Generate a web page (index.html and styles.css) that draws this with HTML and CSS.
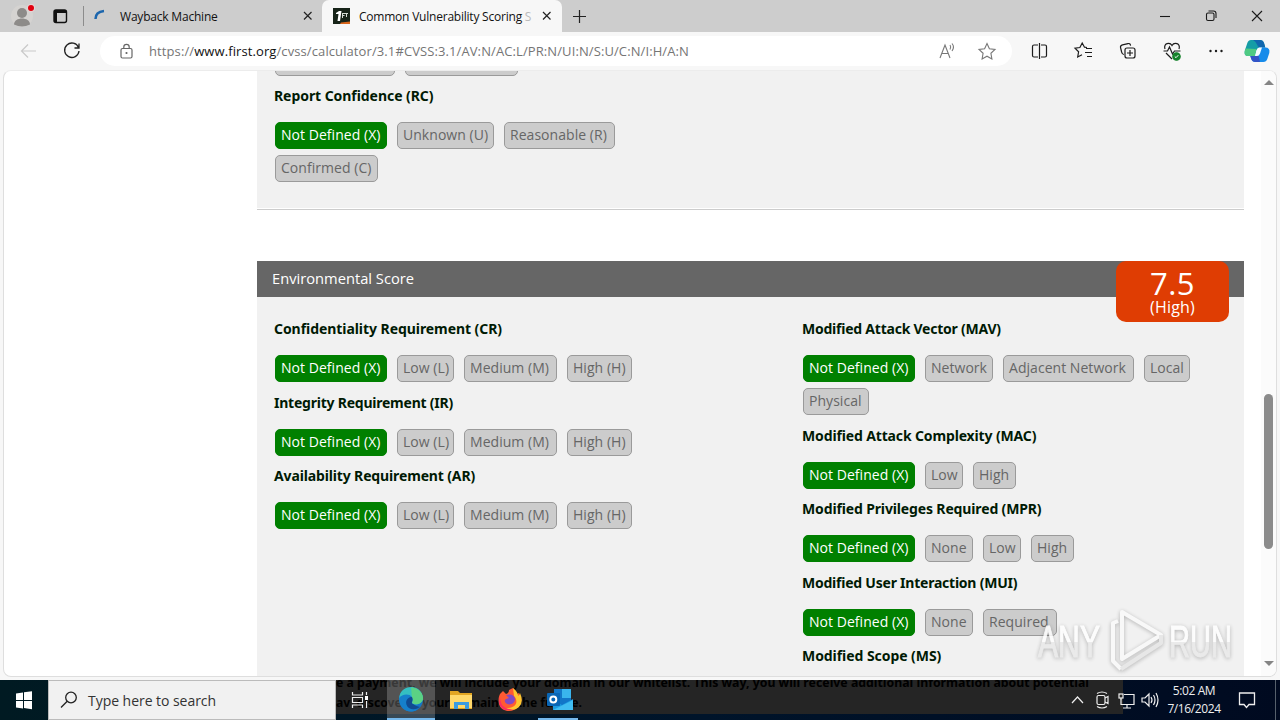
FILE: index.html
```html
<!DOCTYPE html>
<html lang="en">
<head>
<meta charset="utf-8">
<title>Common Vulnerability Scoring System</title>
<link rel="stylesheet" href="styles.css">
</head>
<body>
<div class="screen">
<header class="tabbar">
  <svg class="profile" width="86" height="32" viewBox="0 0 86 32"><circle cx="22" cy="16" r="11" fill="#d5d3d1"/><circle cx="22" cy="13" r="5" fill="#8d8b89"/><path d="M14 24.500c0-8 16-8 16 0q-8 4-16 0z" fill="#8d8b89"/><circle cx="31" cy="8" r="4" fill="#e6d4d4"/><circle cx="31" cy="8" r="3" fill="#e1000f"/><rect x="54" y="10" width="12.500" height="12.500" rx="2" fill="none" stroke="#111" stroke-width="1.400"/><path d="M54 10h12v3H54zM54 11h3v11h-3z" fill="#111"/><path d="M83.500 6v20" stroke="#8c8c8c"/></svg>
  <div class="tab">
    <svg width="16" height="16" viewBox="0 0 16 16"><path d="M3.500 11C3.500 7 6 3.500 12 3" fill="none" stroke="#1c66ad" stroke-width="2.500"/></svg>
    <span class="tab-title t-way">Wayback Machine</span>
    <svg class="close" width="10" height="10" viewBox="0 0 10 10"><path d="M1 1l7.500 7.500M8.500 1L1 8.500" stroke="#222" stroke-width="1.200"/></svg>
  </div>
  <div class="tab active">
    <svg width="17" height="16" viewBox="0 0 17 16"><path d="M0 0h17v16H0z" fill="#172419"/><path d="M3 5l3-2h2.500l-1.500 10H4.500L5.500 6H3z" fill="#fff"/><path d="M9 5h3v1h-2v1h1.500v1H10v2H9zM12 5h3v1h-1v3h-1V6h-1z" fill="#d5dcd5"/><path d="M7 16l1-1.500 9-1V16z" fill="#d9661c"/></svg>
    <span class="tab-title t-cvss">Common Vulnerability Scoring <span class="fade">S</span></span>
    <svg class="close" width="10" height="10" viewBox="0 0 10 10"><path d="M1 1l7.500 7.500M8.500 1L1 8.500" stroke="#222" stroke-width="1.200"/></svg>
  </div>
  <svg class="plus" width="15" height="15" viewBox="0 0 15 15"><path d="M7.500 1v13M1 7.500h13" stroke="#222" stroke-width="1.200"/></svg>
  <svg class="winctl" width="120" height="32" viewBox="0 0 120 32" fill="none" stroke="#1a1a1a" stroke-width="1.100"><path d="M0 16.500h10"/><rect x="46.500" y="13" width="7.500" height="7.500" rx="1.500"/><path d="M48.500 11h5q2.500 0 2.500 2.500V18"/><path d="M92 11l10 10M102 11L92 21"/></svg>
</header>
<div class="toolbar">
  <svg class="nav" width="100" height="38" viewBox="0 0 100 38" fill="none"><path d="M36 19H21.500M28 12.500L21.500 19l6.500 6.500" stroke="#c9c9c9" stroke-width="1.200"/><path d="M78.500 15.500A7.200 7.200 0 1 0 79 19M79 11.500v4.500h-4.500" stroke="#222" stroke-width="1.300"/></svg>
  <div class="address">
    <svg width="14" height="16" viewBox="0 0 14 16" fill="none" stroke="#666" stroke-width="1.200"><rect x="1" y="5.500" width="11" height="9.500" rx="1.500"/><path d="M3.800 5V4a2.700 2.700 0 0 1 5.400 0v1"/><circle cx="6.500" cy="10" r=".5" fill="#666"/></svg>
    <span class="url">https://<b>www.first.org</b>/cvss/calculator/3.1#CVSS:3.1/AV:N/AC:L/PR:N/UI:N/S:U/C:N/I:H/A:N</span>
    <svg class="addr-icons" width="60" height="20" viewBox="0 0 60 20" fill="none" stroke="#777" stroke-width="1.100"><path d="M1 17L6 4l5 13M3 12.500h6M11 4q1.500 2 0 4.500M13 2.500q3 3.500 0 7.500"/><path d="M48 2.500l2.400 5.200 5.600.7-4.100 3.900 1 5.700-4.900-2.800-4.900 2.800 1-5.700L40 8.400l5.600-.7z"/></svg>
  </div>
  <svg class="tools" width="260" height="38" viewBox="0 0 260 38" fill="none" stroke="#1c1c1c" stroke-width="1.200">
    <path d="M18 13h-4q-1.500 0-1.500 1.500v9q0 1.500 1.500 1.500h4M21 13h4q1.500 0 1.500 1.500v9Q26.500 25 25 25h-4M19.500 11v16"/>
    <path d="M67 15.500l-2.500-.3-2.300-4.200-2.300 4.500-4.900.7 3.600 3.600-.9 5.200 4.300-2.300M66 16.500h6M65 20.500h7M67 24.500h5"/>
    <path d="M104 22.500c-2 0-2-1-2.500-3l-1-4q-.3-2 2-2.600l5.500-1.300q2-.5 2.600 2"/><rect x="105" y="16" width="10" height="10" rx="2"/><path d="M110 18v6M107 21h6"/>
    <path d="M145 17c-2-6 5-7 7-3.500 2-3.500 9-2.500 7 3.500M143.500 19h4l2-4 3 7 2-3h6M146 21l6 6"/><circle cx="156.500" cy="24.500" r="3.700" fill="#16832b" stroke="#16832b"/><path d="M154.800 24.500l1.200 1.200 2.300-2.500" stroke="#fff" stroke-width="1"/>
    <g fill="#1c1c1c" stroke="none"><circle cx="190.500" cy="19" r="1.200"/><circle cx="196" cy="19" r="1.200"/><circle cx="201.500" cy="19" r="1.200"/></g>
    <g stroke="none"><path d="M231 8h9q3 0 4 3l1.300 4.500H240q-2.500 0-3.500 3l-1.500 5.500h-8q-3.500-1-2-6l2-6q1-4 4-4z" fill="#159da6"/><path d="M233 8h7q3 0 4 3l1.300 4.500H240q-2 0-3-3t-4-4.500z" fill="#1267ae"/><path d="M226 16.500l10.500.5-1.500 7h-8q-3.500-1-2-6z" fill="#4fca83"/><path d="M240 15.500l5.300 0q5 0 4 5.500l-2 6q-1 3-4 3h-8q-3 0-4-3l-1-3h4.700q2 0 3-3z" fill="#168bea"/><path d="M230.300 24h4.700q2 0 3-3l2 9h-4.700q-3 0-4-3z" fill="#3353c6"/><path d="M236.500 18.500q1-3 3.500-3h2l-2 6q-1 2.500-3 2.500h-2z" fill="#f4fbff"/></g>
  </svg>
</div>
<main class="viewport">
  <div class="page">
    <section class="panel first">
      <div class="opts clipped"><span class="opt w120"></span><span class="opt w113"></span></div>
      <div class="metric"><h4 class="wide">Report Confidence (RC)</h4><div class="opts"><span class="opt on">Not Defined (X)</span><span class="opt w97">Unknown (U)</span><span class="opt w111">Reasonable (R)</span><span class="opt w103">Confirmed (C)</span></div></div>
    </section>
    <section class="env">
      <div class="env-head"><span>Environmental Score</span><div class="score"><strong>7.5</strong><small>(High)</small></div></div>
      <div class="panel columns">
        <div class="col">
          <div class="metric"><h4 class="wide">Confidentiality Requirement (CR)</h4><div class="opts"><span class="opt on">Not Defined (X)</span><span class="opt w57">Low (L)</span><span class="opt w93">Medium (M)</span><span class="opt w65">High (H)</span></div></div>
          <div class="metric"><h4>Integrity Requirement (IR)</h4><div class="opts"><span class="opt on">Not Defined (X)</span><span class="opt w57">Low (L)</span><span class="opt w93">Medium (M)</span><span class="opt w65">High (H)</span></div></div>
          <div class="metric"><h4 class="mid">Availability Requirement (AR)</h4><div class="opts"><span class="opt on">Not Defined (X)</span><span class="opt w57">Low (L)</span><span class="opt w93">Medium (M)</span><span class="opt w65">High (H)</span></div></div>
        </div>
        <div class="col">
          <div class="metric"><h4>Modified Attack Vector (MAV)</h4><div class="opts"><span class="opt on">Not Defined (X)</span><span class="opt w68">Network</span><span class="opt w131">Adjacent Network</span><span class="opt w46">Local</span><span class="opt w66">Physical</span></div></div>
          <div class="metric"><h4 class="mid">Modified Attack Complexity (MAC)</h4><div class="opts"><span class="opt on">Not Defined (X)</span><span class="opt w38">Low</span><span class="opt w43">High</span></div></div>
          <div class="metric"><h4 class="mid">Modified Privileges Required (MPR)</h4><div class="opts"><span class="opt on">Not Defined (X)</span><span class="opt w48">None</span><span class="opt w38">Low</span><span class="opt w43">High</span></div></div>
          <div class="metric"><h4>Modified User Interaction (MUI)</h4><div class="opts"><span class="opt on">Not Defined (X)</span><span class="opt w48">None</span><span class="opt w74">Required</span></div></div>
          <div class="metric"><h4 class="wide">Modified Scope (MS)</h4></div>
        </div>
      </div>
    </section>
  </div>
  <div class="scroll"><i class="up"></i><i class="thumb"></i><i class="down"></i></div>
</main>
<footer class="taskbar">
  <svg class="start" width="48" height="40" viewBox="0 0 48 40"><path d="M16 13.500l7-1V20h-7zM24 12.300l8-1.100V20h-8zM16 21h7v7.500l-7-1zM24 21h8v8.200l-8-1.100z" fill="#fff"/></svg>
  <div class="search"><svg width="18" height="18" viewBox="0 0 18 18" fill="none" stroke="#222" stroke-width="1.300"><circle cx="11" cy="6.500" r="5.300"/><path d="M7.200 10.300L1 16.500"/></svg><span>Type here to search</span></div>
  <div class="apps">
    <svg width="48" height="40" viewBox="0 0 48 40" fill="none" stroke="#eee" stroke-width="1.200"><path d="M13.500 12v3h10v-3M13.500 28v-3h10v3M13.500 17.500h10v5h-10zM27.500 12v3M27.500 21v7"/><path d="M26 16h3v4h-3z" fill="#fff" stroke="none"/></svg>
    <svg class="selected" width="48" height="40" viewBox="0 0 48 40"><circle cx="24" cy="19.500" r="12" fill="#1475c8"/><path d="M12.500 16C15 5 31 4 35 14c3 8-4 12-9 10-3-1 1-3-1-6-3-4-9-4-13 1z" fill="#35bfc1"/><path d="M24 7.500c8 0 13 7 12 12-1 4-6 6-10 4-2-1 1-3-1-6z" fill="#5bd184"/><path d="M12 18c3-4 10-5 13-1-6 0-8 7-3 11q4 3 9 1c-8 6-19 1-19-11z" fill="#1680cb"/><path d="M25 17c-6 0-8 7-3 11q5 3 11-1-3 0-7-3c-3-1 1-3-1-7z" fill="#114b91"/></svg>
    <svg width="48" height="40" viewBox="0 0 48 40"><path d="M14 11h8l2 2h12v16H14z" fill="#e2a522"/><path d="M14 15h22v13H14z" fill="#ffd86a"/><path d="M18 22h15v7h-4v-4h-7v4h-4z" fill="#3a9be1"/></svg>
    <svg width="48" height="40" viewBox="0 0 48 40"><path d="M14 14l3-3 3 3q3-1 3-4l4-2q3 3 4 6l2-1q5 8 0 13c-6 8-18 6-20-2-1-5 0-8 1-10z" transform="translate(1)" fill="#ff5a32"/><path d="M28 8q5 4 5 8 2-1 2-3 4 9-1 14c-5 4-9 3-13 1 12 0 12-8 8-12z" fill="#ffc62f"/><path d="M15 16q0 14 13 13-11 4-14-6z" fill="#fa2d63"/><path d="M21 15q8-2 9 4c0 6-8 7-10 3-1-3 2-3 4-4z" fill="#8249c4"/></svg>
    <svg width="40" height="40" viewBox="4 0 40 40"><g transform="translate(1)"><path d="M19 9h17v21H19z" fill="#1276c8"/><path d="M27 9h9v9h-9z" fill="#39b5ed"/><path d="M18 20l9 5 11-6v11H18z" fill="#1b9be0"/><path d="M18 30l20-10v10z" fill="#41bdf1"/><rect x="12" y="13" width="13" height="13" rx="1" fill="#0966b5"/><circle cx="18.300" cy="19.500" r="3" fill="none" stroke="#fff" stroke-width="2"/></g></svg>
  </div>
  <svg class="notice" width="787" height="34" viewBox="0 0 787 34"><text x="0" y="7" textLength="753" lengthAdjust="spacingAndGlyphs">e a payment, we will include your domain in our whitelist. This way, you will receive additional information about potential</text><text x="0" y="27" textLength="246" lengthAdjust="spacingAndGlyphs">av&#160; discover if your domain in the future.</text></svg>
  <div class="tray">
    <svg width="92" height="40" viewBox="0 0 92 40" fill="none" stroke="#eee" stroke-width="1.200"><path d="M1 23l5.500-6 5.500 6"/><rect x="26" y="15.500" width="8" height="9" rx="1.500"/><path d="M34 18l3-1.500v7L34 22M26 13.500q5-3 10 0M26 26.500q5 3 10 0M53 14.500h10v10H50v-5M56 25v3M52 28h8"/><rect x="48" y="14" width="4" height="4"/><path d="M50 18v2M71 18h3l4-4v12l-4-4h-3zM80 17q2 3 0 6M82.500 15q3 5 0 10M85 13q4 7 0 14"/></svg>
    <div class="clock"><span>5:02 AM</span><span>7/16/2024</span></div>
    <svg width="18" height="18" viewBox="0 0 18 18" fill="none" stroke="#eee" stroke-width="1.300"><path d="M1.500 2h15v11.500H11l-2.500 3-2.500-3H1.500z"/></svg>
  </div>
  <i class="peek"></i>
</footer>
<svg class="watermark" width="210" height="72" viewBox="0 0 210 72"><defs><linearGradient id="wm" x1="0" y1="0" x2="0" y2="1"><stop offset=".5" stop-color="#fff"/><stop offset=".52" stop-color="#e9e9e9"/></linearGradient></defs><g fill="url(#wm)" stroke="url(#wm)" stroke-width="1"><text x="8" y="53" textLength="62" lengthAdjust="spacingAndGlyphs">ANY</text><text x="139" y="53" textLength="63" lengthAdjust="spacingAndGlyphs">RUN</text></g><g fill="none" stroke="#fafafa" stroke-width="4" stroke-linejoin="round"><path d="M88 17l-5 2v38l8 8M92 48V8l39 23-39 24z"/><path d="M91 65l40-26v-8" stroke="#e6e6e6"/></g></svg>
</div>
</body>
</html>
```
FILE: styles.css
```css
* { box-sizing: border-box; }
body { margin: 0; font-family: "Open Sans", sans-serif; }
.screen { width: 1280px; height: 720px; position: relative; overflow: hidden; background: #f7f7f7; display: flex; flex-direction: column; }
.tabbar { height: 32px; background: #cdcdcd; display: flex; align-items: center; flex: none; }
.profile { flex: none; }
.tab { width: 236px; height: 32px; padding: 0 9px 0 6px; display: flex; align-items: center; flex: none; }
.tab.active { width: 240px; padding: 0 10px 0 11px; background: #f7f7f7; border-radius: 7px 7px 0 0; }
.tab-title { font-size: 12px; margin-left: 12px; white-space: nowrap; color: #111; }
.active .tab-title { margin-left: 9px; }
.t-way { letter-spacing: -.2px; }
.t-cvss { letter-spacing: -.22px; }
.fade { color: #bbb; }
.close { margin-left: auto; }
.plus { margin-left: 10px; }
.winctl { margin-left: auto; }
.toolbar { height: 38px; display: flex; align-items: center; flex: none; }
.nav { flex: none; }
.address { width: 912px; height: 30px; background: #fff; border-radius: 15px; display: flex; align-items: center; padding: 0 13px 0 20px; flex: none; }
.url { margin-left: 15px; font-size: 13px; letter-spacing: .1px; color: #757575; white-space: nowrap; }
.url b { font-weight: 400; color: #111; }
.addr-icons { margin-left: auto; }
.tools { margin-left: 8px; flex: none; }
.viewport { height: 607px; margin: 0 3px; background: #fff; border: 1px solid #dedede; border-top-color: #ececec; border-radius: 8px; overflow: hidden; display: flex; flex: none; }
.page { width: 987px; margin-left: 253px; flex: none; }
.panel { background: #f1f1f1; padding-left: 17px; }
.first { height: 138px; box-shadow: 0 1px #fff, 0 2px #ccc; padding-top: 1px; margin-top: -1px; }
.clipped { margin-top: -22px; margin-bottom: 10px; }
.env { margin-top: 53px; }
.env-head { height: 36px; background: #666; color: #fff; position: relative; display: flex; align-items: center; padding: 0 0 2px 15px; font-size: 14.7px; }
.score { position: absolute; right: 15px; top: 0; width: 113px; height: 61px; border-radius: 10px; background: #df3d03; display: flex; flex-direction: column; align-items: center; }
.score strong { font-size: 31px; line-height: 35px; height: 35px; font-weight: 400; padding-top: 5px; letter-spacing: .4px; }
.score small { font-size: 16px; line-height: 22px; letter-spacing: .2px; }
.columns { display: flex; padding-top: 22px; height: 400px; }
.col { width: 528px; flex: none; }
.metric { margin-bottom: 10.5px; }
.metric h4 { margin: 0 0 16px; font: 700 14px/20px "Noto Sans", sans-serif; letter-spacing: -.23px; color: #001a04; white-space: nowrap; }
.metric h4.mid { letter-spacing: -.14px; }
.metric h4.wide { letter-spacing: -.06px; }
.opts { display: flex; flex-wrap: wrap; gap: 6px 10px; width: 400px; padding-left: 1px; }
.opt { height: 27px; border: 1px solid #9a9a9a; border-radius: 5px; background: #ccc; color: #666; font-size: 14px; letter-spacing: .04px; line-height: 24px; width: 112px; padding-left: 5px; white-space: nowrap; }
.on { background: #008000; border-color: #008000; color: #fff; }
.w38 { width: 38px; } .w43 { width: 43px; } .w46 { width: 46px; } .w48 { width: 48px; }
.w57 { width: 57px; } .w65 { width: 65px; } .w66 { width: 66px; } .w68 { width: 68px; }
.w74 { width: 74px; } .w93 { width: 93px; } .w97 { width: 97px; } .w103 { width: 103px; }
.w111 { width: 111px; } .w113 { width: 113px; } .w120 { width: 120px; } .w131 { width: 131px; }
.scroll { width: 15px; margin-left: auto; background: #fbfbfb; display: flex; flex-direction: column; align-items: center; padding: 9px 0 10px; }
.up, .down { width: 0; border: 5px solid transparent; }
.up { border-top: 0; border-bottom: 5px solid #858585; }
.down { border-bottom: 0; border-top: 5px solid #858585; margin-top: auto; }
.thumb { width: 9px; height: 155px; margin-top: 309px; border-radius: 5px; background: #8b8b8b; }
.taskbar { height: 40px; margin-top: 3px; position: relative; flex: none; display: flex; background: linear-gradient(90deg, #001a22, #00142a 55%, #000a20); }
.start { flex: none; }
.search { width: 288px; background: #f1f1f1; border: 1px solid #bbb; display: flex; align-items: center; padding-left: 11px; gap: 10px; font-size: 14px; letter-spacing: -.04px; color: #333; flex: none; }
.apps { position: relative; z-index: 1; display: flex; padding-left: 3px; }
.apps svg { flex: none; }
.apps svg + svg + svg { margin-left: 1px; }
.apps svg:last-child { box-shadow: inset 0 -2px #76b9ed; margin-left: 5px !important; }
.selected { background: rgba(255,255,255,.22); box-shadow: inset 0 -2px #76b9ed; }
.notice { position: absolute; left: 336px; top: 0; background: #252525; }
.notice text { font: 700 13px "Noto Sans", sans-serif; fill: #000; }
.tray { position: relative; display: flex; align-items: center; margin-left: auto; color: #eee; margin-right: 24px; }
.clock { display: flex; flex-direction: column; align-items: center; width: 56px; margin: 0 16px 0 3px; font-size: 12px; line-height: 18px; letter-spacing: -.4px; white-space: nowrap; }
.peek { position: absolute; right: 4px; top: 0; width: 1px; height: 40px; background: #56606c; }
.watermark { position: absolute; left: 1030px; top: 604px; filter: drop-shadow(0 1px 2px rgba(0,0,0,.3)); opacity: .85; }
.watermark text { font: 45px "Liberation Sans", sans-serif; }
```
